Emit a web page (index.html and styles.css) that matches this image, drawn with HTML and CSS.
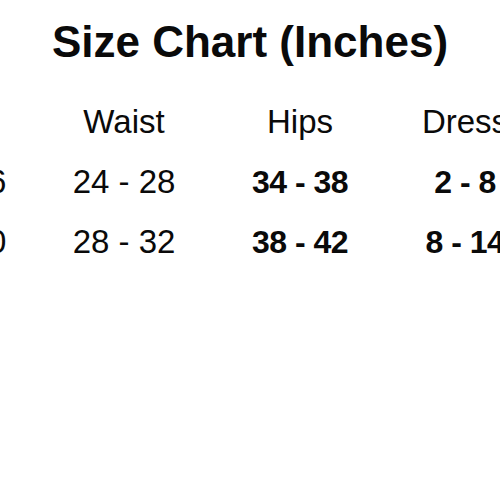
FILE: index.html
```html
<!DOCTYPE html>
<html>
<head>
<meta charset="utf-8">
<link rel="stylesheet" href="styles.css">
</head>
<body>
<div class="page">
  <h1 class="title">Size Chart (Inches)</h1>
  <div class="chart">
    <div class="cell head">Bust</div>
    <div class="cell head">Waist</div>
    <div class="cell head">Hips</div>
    <div class="cell head">Dress</div>
    <div class="cell">32 - 36</div>
    <div class="cell">24 - 28</div>
    <div class="cell bold">34 - 38</div>
    <div class="cell bold">2 - 8</div>
    <div class="cell">36 - 40</div>
    <div class="cell">28 - 32</div>
    <div class="cell bold">38 - 42</div>
    <div class="cell bold">8 - 14</div>
  </div>
</div>
</body>
</html>
```
FILE: styles.css
```css
html, body {
  margin: 0;
  padding: 0;
  background: #ffffff;
  width: 500px;
  height: 500px;
  overflow: hidden;
}
.page {
  font-family: "Liberation Sans", Arial, sans-serif;
  color: #0a0a0a;
  padding-top: 17px;
}
.title {
  margin: 0;
  font-size: 44px;
  line-height: 50px;
  font-weight: bold;
  text-align: center;
  color: #0a0a0a;
}
.chart {
  display: grid;
  grid-template-columns: 170px 168px 184px 146px;
  margin-left: -130px;
  margin-top: 25px;
}
.cell {
  font-size: 33px;
  line-height: 60px;
  text-align: center;
  white-space: nowrap;
}
.bold {
  font-weight: bold;
  font-size: 32px;
  letter-spacing: -0.5px;
}
```
